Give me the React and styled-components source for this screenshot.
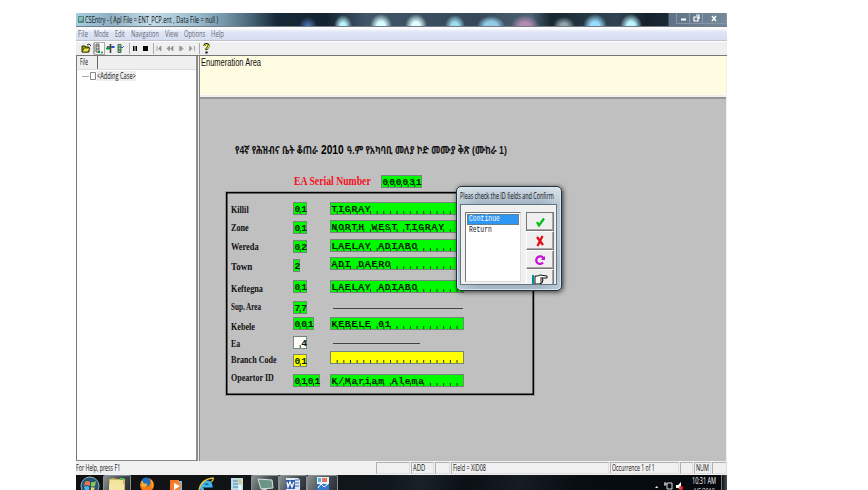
import React, { useLayoutEffect, useRef } from "react";
import styled, { createGlobalStyle, css } from "styled-components";

const GlobalStyle = createGlobalStyle`
  body { margin: 0; background: #fff; overflow: hidden; }
  * { box-sizing: border-box; }
`;

const Page = styled.div`
  width: 868px;
  height: 490px;
  padding: 13px 0 0 76px;
  background: #fff;
  overflow: hidden;
`;
const Desktop = styled.main`
  position: relative;
  display: flex;
  flex-direction: column;
  width: 651px;
  height: 477px;
  background: #efefef;
  overflow: hidden;
`;

/* Text squeezed horizontally to a known width */
const FitBox = styled.div`
  flex: none;
  width: ${(p) => p.$w}px;
  height: ${(p) => p.$h || 12}px;
  line-height: ${(p) => p.$h || 12}px;
  margin: ${(p) => p.$m || "0"};
  font-family: ${(p) => p.$family || '"Open Sans", "Noto Sans", sans-serif'};
  font-size: ${(p) => p.$size || 8.8}px;
  font-weight: ${(p) => p.$weight || 400};
  color: ${(p) => p.$color || "#111"};
  white-space: pre;
`;
const FitText = styled.span`
  display: inline-block;
  transform-origin: 0 50%;
`;
function Fit({ children, ...box }) {
  const ref = useRef(null);
  useLayoutEffect(() => {
    const el = ref.current;
    el.style.transform = `scaleX(${box.$w / el.offsetWidth})`;
  }, [box.$w, children]);
  return (
    <FitBox {...box}>
      <FitText ref={ref}>{children}</FitText>
    </FitBox>
  );
}

const TitleBar = styled.header`
  display: flex;
  align-items: center;
  height: 14px;
  flex: none;
  padding-left: 2px;
  border-bottom: 1px solid #777d86;
  background:
    radial-gradient(ellipse 9px 9px at 232px 13px, #527bbf, transparent),
    radial-gradient(ellipse 9px 11px at 267px 13px, #b9f4ff 30%, transparent),
    radial-gradient(ellipse 11px 12px at 305px 13px, #d8ffff 35%, transparent),
    radial-gradient(ellipse 11px 12px at 340px 13px, #e0ffff 35%, transparent),
    radial-gradient(ellipse 10px 11px at 379px 13px, #9ddcec 35%, transparent),
    radial-gradient(ellipse 14px 10px at 415px 13px, #91cbe7 45%, transparent),
    radial-gradient(ellipse 14px 11px at 449px 13px, #b28bb0 35%, transparent),
    radial-gradient(ellipse 11px 9px at 488px 13px, #94a5a9 30%, transparent),
    radial-gradient(ellipse 12px 12px at 519px 13px, #99ddff 35%, transparent),
    radial-gradient(ellipse 11px 12px at 555px 13px, #bcf5ff 35%, transparent),
    linear-gradient(90deg, #a5cfe0 0, #8db0c2 35px, #c4dce8 75px, #9abccc 120px, #7294a4 150px, #476477 175px, #172937 200px, #152330 250px, #41566a 290px, #35485a 400px, #4c6274 455px, #172630 475px, #314453 540px, #13222c 570px, #1c2a34 592px, #5d7286 593px, #75899c);
`;
const WindowButtons = styled.div`
  display: flex;
  height: 11px;
  margin: -2px 0 0 auto;
  width: 51px;
  border: 1px solid #8495a5;
  border-top: 0;
  svg { width: 100%; height: 100%; }
`;
const MenuBar = styled.nav`
  display: flex;
  height: 14px;
  flex: none;
  padding-left: 2px;
  border-top: 1px solid #fafaff;
  border-bottom: 1px solid #bfc2cc;
  background: linear-gradient(#fff, #dfe5f5 35%, #d6def1);
`;
const ToolBar = styled.div`
  height: 15px;
  flex: none;
  border-top: 1px solid #fff;
  border-bottom: 1px solid #777;
  svg { display: block; }
`;
const Workspace = styled.div`
  display: flex;
  flex: none;
  height: 405px;
`;
const TreePane = styled.aside`
  display: flex;
  flex-direction: column;
  width: 122px;
  margin-right: 1px;
  border-left: 1px solid #777;
  border-right: 2px solid #8c8c8c;
  border-bottom: 1px solid #888;
  background: #fff;
`;
const TabStrip = styled.div`
  display: flex;
  height: 14px;
  background: #efefef;
  border-bottom: 1px solid #ddd;
`;
const Tab = styled.div`
  width: 21px;
  height: 13px;
  padding-left: 3px;
  border-right: 1px solid #666;
`;
const TreeItem = styled.div`
  display: flex;
  align-items: center;
  height: 12px;
  svg { margin-left: 5px; }
`;
const TreeLabel = styled.div`
  margin-left: 1px;
  background: #eee;
  height: 10px;
`;
const RightPane = styled.section`
  flex: 1;
  display: flex;
  flex-direction: column;
  border-left: 1px solid #858585;
  margin-right: 1px;
`;
const Question = styled.div`
  height: 39px;
  flex: none;
  padding: 0 0 0 1px;
  background: #fffce1;
`;
const FormArea = styled.div`
  flex: 1;
  border-top: 2px solid #969696;
  margin-top: 2px;
  padding-left: 26px;
  background: #c0c0c0;
`;
const Heading = styled.div`
  display: flex;
  gap: 3px;
  height: 32px;
  margin-top: 43px;
  padding-left: 9px;
`;
const SerialRow = styled.div`
  display: flex;
  height: 18px;
  padding: 1px 0 0 68px;
`;
const Frame = styled.div`
  width: 308px;
  height: 203px;
  border: 1px solid #000;
  box-shadow: inset 0 0 0 0.5px #000;
  outline: 1px solid #0003;
  padding: 9px 0 0 4px;
`;
const Row = styled.div`
  display: grid;
  grid-template-columns: 62px 37px 134px;
  align-items: start;
  height: ${(p) => p.$h}px;
`;
const entryColors = { green: "#00fa00", yellow: "#ffff00", white: "#ffffff" };
const Entry = styled.div`
  width: ${(p) => p.$cells * 6.67 + 0.7}px;
  height: 13px;
  margin-top: ${(p) => p.$dy || 0}px;
  padding-left: 0.5px;
  border: 1px solid #77867a;
  background-color: ${(p) => entryColors[p.$tone || "green"]};
  background-image: linear-gradient(90deg, transparent 5.6px, #0a3a0a 5.6px);
  background-size: 6.67px 3px;
  background-repeat: repeat-x;
  background-position: 0 100%;
  font: bold 9.6px/13px "Liberation Mono", monospace;
  letter-spacing: 0.91px;
  color: #001c00;
  white-space: pre;
`;
const Rule = styled.div`
  width: ${(p) => p.$w}px;
  height: 1px;
  margin: ${(p) => p.$dy}px 0 0 3px;
  background: #444;
`;
const Dialog = styled.div`
  position: absolute;
  left: 380px;
  top: 173px;
  width: 106px;
  height: 105px;
  padding: 2px 4px 4px 3px;
  border: 1px solid #25313b;
  border-radius: 5px;
  background:
    linear-gradient(90deg, #ddecee66, transparent 20%, transparent 80%, #e5eef266),
    linear-gradient(#d5e0e9, #9eb0c1 18%, #a7b8c6 40%, #91a3b2 75%, #a7bac8);
  box-shadow: inset 0 0 0 1px #d5e5ee, 1px 1px 5px #000b;
`;
const DialogBody = styled.div`
  display: flex;
  gap: 5px;
  height: 81px;
  padding: 7px 2px 0 4px;
  border: 1px solid #657480;
  background: #f0f0f0;
  overflow: hidden;
`;
const List = styled.div`
  width: 57px;
  height: 70px;
  padding: 1px;
  border: 1px solid #777;
  border-right-color: #ddd;
  border-bottom-color: #ddd;
  background: #fff;
`;
const Option = styled.div`
  height: 11px;
  padding-left: 2px;
  ${(p) => p.$active && css`background: #3096f4; outline: 1px dotted #986b32; outline-offset: -1px;`}
`;
const Buttons = styled.div`
  display: flex;
  flex-direction: column;
  width: 28px;
`;
const PushButton = styled.button`
  display: grid;
  place-items: center;
  height: 19px;
  flex: none;
  padding: 0;
  border: 1px solid #777;
  border-top-color: ${(p) => (p.$focus ? "#777" : "#fff")};
  border-left-color: ${(p) => (p.$focus ? "#777" : "#fff")};
  background: #efefef;
  box-shadow: inset -1px -1px #aaa;
`;
const StatusBar = styled.footer`
  display: flex;
  height: 14px;
  flex: none;
  background: #f0f0f0;
`;
const StatusCell = styled.div`
  width: ${(p) => p.$w}px;
  height: 12px;
  margin: 1px 1px 0 0;
  padding-left: 1px;
  border: 1px solid #b2b2b2;
  border-right-color: #ddd;
  border-bottom-color: #ddd;
  flex: none;
`;
const Taskbar = styled.div`
  display: flex;
  flex: none;
  height: 15px;
  background: linear-gradient(110deg, #111 0, #10171c 48%, #192128 53%, #0b1015 60%, #161c23 68%, #080d12 77%, #05090e);
`;
const TaskItem = styled.div`
  width: ${(p) => p.$w}px;
  height: 15px;
  flex: none;
  ${(p) => p.$open && css`
    border: 1px solid #8a8f91;
    border-bottom: 0;
    border-radius: 2px 2px 0 0;
    background: linear-gradient(120deg, #899092, #41484c 60%, #292e33);
  `}
  svg { display: block; margin: ${(p) => (p.$open ? "-1px auto 0" : "0 auto")}; }
`;
const Tray = styled.div`
  display: flex;
  margin-left: auto;
`;
const Clock = styled.div`
  width: 29px;
`;
const ShowDesktop = styled.div`
  width: 6px;
  border-left: 1px solid #777;
  background: linear-gradient(90deg, #111, #455058);
`;

const rows = [
  { label: "Killil", w: 18, ly: 2, code: "01", h: 19, text: "TIGRAY" },
  { label: "Zone", w: 18, ly: 1, code: "01", h: 19, text: "NORTH WEST TIGRAY", dy: -1 },
  { label: "Wereda", w: 28, ly: 1, code: "02", h: 19, text: "LAELAY ADIABO", dy: -1 },
  { label: "Town", w: 21, ly: 2, code: "2", h: 21, text: "ADI DAERO", dy: -2 },
  { label: "Keftegna", w: 32, ly: 3, code: "01", h: 21, text: "LAELAY ADIABO" },
  { label: "Sup. Area", w: 30, ly: 0, code: "77", h: 16, rule: 130, dy: 7 },
  { label: "Kebele", w: 24, ly: 4, code: "001", h: 19, text: "KEBELE 01" },
  { label: "Ea", w: 9, ly: 2, code: " 4", h: 18, rule: 87, dy: 7, tone: "white" },
  { label: "Branch Code", w: 46, ly: 0, code: "01", h: 20, text: "", dy: -3, tone: "yellow" },
  { label: "Opeartor ID", w: 43, ly: -2, code: "0101", h: 13, text: "K/Mariam Alema" },
];
const menus = [["File", 10, 6], ["Mode", 15, 6], ["Edit", 10, 6], ["Navigation", 28, 6], ["View", 13, 6], ["Options", 21, 6], ["Help", 13, 0]];
const headingFont = '"Liberation Sans", "Noto Sans Ethiopic", sans-serif';

const ToolIcons = () => (
  <svg width="140" height="13" viewBox="76 41 140 13">
    <path d="M82 45h3l1 1h3v5h-7z" fill="#a8a600" stroke="#292900" />
    <path d="M84 47h6l-2 4h-6z" fill="#e7e451" stroke="#333300" strokeWidth=".8" />
    <path d="M87 44l2-1 2 2" fill="none" stroke="#222" />
    <path d="M93.5 42v11M129.5 42v11M153.5 42v11M199.5 42v11" stroke="#aaa" />
    <rect x="94.5" y="41.5" width="10" height="12" fill="#f8f8f8" stroke="#aaa" />
    <path d="M96 43h3v8h-3zM96 45h3M96 48h3" fill="#ddd" stroke="#444" strokeWidth=".8" />
    <path d="M98 51h2" stroke="#009a28" strokeWidth="2" />
    <circle cx="102" cy="51.500" r="1" fill="#18894d" />
    <path d="M110.500 43v9M107 46h7" stroke="#444" strokeWidth="1.600" />
    <path d="M106 47.500h4" stroke="#079b32" strokeWidth="2" /><path d="M112 46h2.500" stroke="#1551e1" strokeWidth="2" />
    <path d="M118 43.500h3v8h-3zM118 46h3M118 49h3" fill="#80dc75" stroke="#345" strokeWidth=".8" />
    <path d="M121 46l1 1 2-2" fill="none" stroke="#205cce" />
    <path d="M133 45h1.500v5H133zM135.500 45h1.500v5h-1.500zM143 45h5v5h-5z" fill="#050505" />
    <g stroke="#969696" fill="#969696" strokeWidth=".8">
      <path d="M157 45v5M161 45l-2.500 2.500 2.500 2.500zM169.500 45l-2.500 2.500 2.500 2.500zM173 45l-2.500 2.500 2.500 2.500zM179.500 45v5M180.500 45l2.500 2.500-2.500 2.500zM189.500 45l2.500 2.500-2.500 2.500zM194.500 45v5" />
    </g>
    <path d="M204.500 45q0-2 2-2t2 2q0 1-2 3v1M206.500 50.500v2" fill="none" stroke="#111" strokeWidth="2.200" />
    <path d="M204.500 45.500q0-2 2-2t2 2q0 1-2 2.500" fill="none" stroke="#e9e800" strokeWidth="1.200" />
  </svg>
);

const taskIcons = {
  start: <svg width="23" height="15"><circle cx="12" cy="11" r="9" fill="#255476" stroke="#92b6c6" /><path d="M7 7q3-2 5 0v4q-3-2-6 0z" fill="#ea7950" /><path d="M13 7q2 1 5-1l-1 5q-3 1-4 0z" fill="#8cc755" /><path d="M6 12q3-2 5 0v3H7z" fill="#4cb3e9" /><path d="M13 12q3 1 4 0l-1 3h-3z" fill="#f3d55a" /></svg>,
  folder: <svg width="20" height="15"><path d="M2 4l5-1 2 1h9v11H2z" fill="#d1b562" /><path d="M3 5h13v10H3z" fill="#f2e49c" /><path d="M2 9h15v6H2z" fill="#f6e6a6" /><path d="M13 4h4" stroke="#58b957" strokeWidth="2" /></svg>,
  firefox: <svg width="18" height="15"><circle cx="9" cy="10" r="7" fill="#f47816" /><circle cx="8" cy="7" r="4.500" fill="#226cc0" /><path d="M4 6q1 4 5 3-1 4-5 2zM13 5q3 3 1 8" fill="#ffac22" stroke="#fbb337" /></svg>,
  media: <svg width="18" height="15"><rect x="3" y="5" width="9" height="10" fill="#f0772b" /><rect x="11" y="6" width="4" height="9" fill="#80b9de" /><circle cx="9" cy="11" r="5" fill="#f97e23" /><path d="M7 8l6 3-6 4z" fill="#fff" /></svg>,
  ie: <svg width="20" height="15"><path d="M15 11H6q1-4 5-4 3.500 0 4 4zM5 11q0 4 3 4" fill="none" stroke="#42b6ee" strokeWidth="3" /><path d="M3 15Q5 4 17 3q1 2-2 4" fill="none" stroke="#ecc72e" strokeWidth="1.300" /></svg>,
  calc: <svg width="18" height="15"><rect x="3" y="3" width="12" height="12" fill="#bddcec" /><path d="M5 6h5M5 9h5M5 12h5" stroke="#4086ae" /><path d="M12 4v5" stroke="#e6c74c" strokeWidth="2" /><path d="M12 10v5" stroke="#e9f8ff" strokeWidth="3" /></svg>,
  monitor: <svg width="22" height="15"><path d="M4 4l14 1 1 8-12 1z" fill="#6c9487" stroke="#d4e4e1" /><path d="M8 14l5 1" stroke="#ddd" /></svg>,
  word: <svg width="20" height="15"><path d="M3 3h12l2 2v10H3z" fill="#dee9f9" /><path d="M12 5h4M12 8h4M12 11h4" stroke="#4670b4" /><rect x="3" y="5" width="9" height="9" fill="#315ca8" /><path d="M4 7l1 5 2-5 2 5 2-5" fill="none" stroke="white" strokeWidth="1.300" /></svg>,
  paint: <svg width="20" height="15"><path d="M4 2h12v13H4z" fill="#e8f1fb" /><path d="M5 3h3v4H5z" fill="#4db7f0" /><path d="M9 3h5v4H9z" fill="#f0705e" /><path d="M4 9h12v6H4z" fill="#3579ce" /><path d="M5 13l3-4 3 3 4-3" fill="none" stroke="#fff" /></svg>,
};
const taskItems = [["start", 27], ["folder", 28, true], ["firefox", 31], ["media", 28], ["ie", 32], ["calc", 29], ["monitor", 28, true], ["word", 28, true], ["paint", 31, true]];

export default function App() {
  return (
    <Page>
      <GlobalStyle />
      <Desktop>
        <TitleBar>
          <svg width="7" height="9"><rect y="1" width="6" height="7" fill="#538989" /><path d="M1 3h4M1 5h3" stroke="#c9f1df" /></svg>
          <Fit $w={133}>CSEntry - ( Apl File = ENT_PCP.ent , Data File = null )</Fit>
          <WindowButtons>
            <svg viewBox="0 0 49 10"><path d="M12.500 0v10M25.500 0v10" stroke="#8b9baa" /><path d="M4 6.500h5" stroke="#fff" strokeWidth="2" /><path d="M17 4h4v4h-4zM19 2h3v4" fill="none" stroke="#fff" strokeWidth="1.200" /><path d="M35 3l4 5M39 3l-4 5" stroke="#fff" strokeWidth="1.400" /></svg>
          </WindowButtons>
        </TitleBar>
        <MenuBar>
          {menus.map(([name, w, gap]) => <Fit key={name} $w={w} $color="#666b75" $m={`0 ${gap}px 0 0`}>{name}</Fit>)}
        </MenuBar>
        <ToolBar><ToolIcons /></ToolBar>
        <Workspace>
          <TreePane>
            <TabStrip><Tab><Fit $w={8}>File</Fit></Tab></TabStrip>
            <TreeItem>
              <svg width="14" height="10"><path d="M0 5.500h7" stroke="#aaa" /><path d="M8.500 1.500h5v7h-5z" fill="#fff" stroke="#888" /></svg>
              <TreeLabel><Fit $w={39} $h={10}>&lt;Adding Case&gt;</Fit></TreeLabel>
            </TreeItem>
          </TreePane>
          <RightPane>
            <Question><Fit $w={60} $size={10} $h={13} $family='"Liberation Sans", sans-serif'>Enumeration Area</Fit></Question>
            <FormArea>
              <Heading>
                <Fit $w={83} $h={16} $size={11} $weight={700} $family={headingFont}>የ4ኛ የሕዝብና ቤት ቆጠራ</Fit>
                <Fit $w={23} $h={17} $size={12} $color="#000" $weight={700} $family={headingFont}>2010</Fit>
                <Fit $w={160} $h={16} $size={11} $weight={700} $family={headingFont}>ዓ.ም የአካባቢ መለያ ኮድ መሙያ ቅጽ (ሙከራ 1)</Fit>
              </Heading>
              <SerialRow>
                <Fit $w={77} $size={11.5} $weight={700} $color="#f5101c" $family='"Liberation Serif", serif' $m="0 10px 0 0">EA Serial Number</Fit>
                <Entry $cells={6}>000031</Entry>
              </SerialRow>
              <Frame>
                {rows.map((r) => (
                  <Row key={r.label} $h={r.h}>
                    <Fit $w={r.w} $size={9.5} $weight={700} $family='"Liberation Serif", serif' $m={`${r.ly}px 0 0 0`}>{r.label}</Fit>
                    <Entry $cells={r.code.length} $tone={r.tone}>{r.code}</Entry>
                    {r.rule ? <Rule $w={r.rule} $dy={r.dy} /> : <Entry $cells={20} $dy={r.dy} $tone={r.tone}>{r.text}</Entry>}
                  </Row>
                ))}
              </Frame>
            </FormArea>
          </RightPane>
        </Workspace>
        <StatusBar>
          <Fit $w={44} $m="1px 256px 0 0">For Help, press F1</Fit>
          <StatusCell $w={34} />
          <StatusCell $w={23}><Fit $w={12} $h={10}>ADD</Fit></StatusCell>
          <StatusCell $w={15} />
          <StatusCell $w={158}><Fit $w={33} $h={10}>Field = XID08</Fit></StatusCell>
          <StatusCell $w={69}><Fit $w={43} $h={10}>Occurrence 1 of 1</Fit></StatusCell>
          <StatusCell $w={13} />
          <StatusCell $w={17}><Fit $w={13} $h={10}>NUM</Fit></StatusCell>
          <StatusCell $w={15} />
        </StatusBar>
        <Taskbar>
          {taskItems.map(([name, w, open]) => <TaskItem key={name} $w={w} $open={open}>{taskIcons[name]}</TaskItem>)}
          <Tray>
            <svg width="37" height="15"><path d="M0 13l2-2 1 2z" fill="#fff" /><path d="M12 8h5v6h-5zM9 9h3M10 7v4" fill="none" stroke="#ddd" /><path d="M21 10h2l3-3v8l-3-2h-2z" fill="#fff" /><circle cx="26" cy="13" r="2" fill="#ec3022" /></svg>
            <Clock>
              <Fit $w={24} $color="#fff" $h={13}>10:31 AM</Fit>
              <Fit $w={22} $color="#ddd" $h={10} $m="-1px 0 0 1px">4/5/2018</Fit>
            </Clock>
            <ShowDesktop />
          </Tray>
        </Taskbar>
        <Dialog>
          <Fit $w={94} $h={15}>Pleas check the ID fields and Confirm</Fit>
          <DialogBody>
            <List>
              <Option $active><Fit $w={31} $h={11} $size={8.5} $color="#fff" $family='"Liberation Mono", monospace'>Continue</Fit></Option>
              <Option><Fit $w={23} $h={11} $size={8.5} $family='"Liberation Mono", monospace'>Return</Fit></Option>
            </List>
            <Buttons>
              <PushButton $focus><svg width="12" height="12"><path d="M3 6l2 3.500 5-7" fill="none" stroke="#00bd18" strokeWidth="2.200" /></svg></PushButton>
              <PushButton><svg width="12" height="12"><path d="M3 2l6 8M8.500 1L3.500 11" stroke="#e50c16" strokeWidth="2.300" /></svg></PushButton>
              <PushButton><svg width="12" height="12"><path d="M9.500 4.500A3.800 3.800 0 1 0 9 8.500" fill="none" stroke="#cc10d8" strokeWidth="2.300" /><path d="M11 2v4H7z" fill="#cc10d8" /></svg></PushButton>
              <PushButton><svg width="16" height="12"><path d="M1 2v9" stroke="#008e91" strokeWidth="2" /><path d="M3 3h3l2-1 7 1v2h-5l1 2-1 3-3 1H3z" fill="#fff" stroke="#111" /><path d="M8 5h3M8 7h3M8 9h2" stroke="#222" /></svg></PushButton>
            </Buttons>
          </DialogBody>
        </Dialog>
      </Desktop>
    </Page>
  );
}
